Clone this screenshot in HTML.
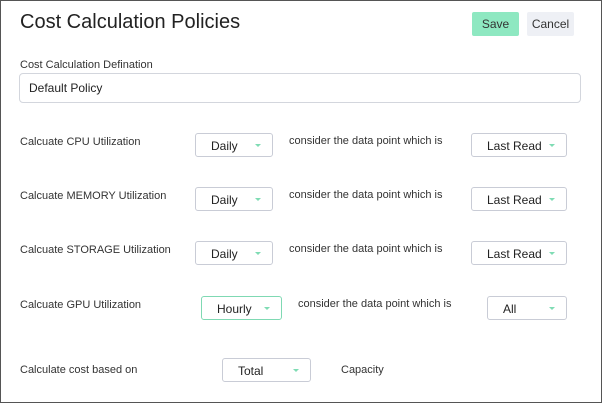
<html><head><style>
body{margin:0;width:602px;height:403px;overflow:hidden;background:#fff;font-family:"Liberation Sans",sans-serif;color:#333}
.f{position:absolute;left:0;top:0;width:600px;height:401px;border:1px solid #555}
.a{position:absolute;white-space:nowrap}
.t{font-size:11px;color:#333}
.dd{position:absolute;box-sizing:border-box;border:1px solid #c9ccd6;border-radius:3px;background:#fff;font-size:12px;color:#222}
.dd span{position:absolute;top:5px}
.dd i{position:absolute;right:11px;top:10px;width:0;height:0;border-left:3px solid transparent;border-right:3px solid transparent;border-top:3px solid #7fdcb4}
</style></head><body><div class="f"></div>
<div class="a" style="left:20px;top:11px;font-size:20px;color:#222">Cost Calculation Policies</div>
<div class="a" style="left:472px;top:12px;width:47px;height:24px;background:#8ee8c1;border-radius:2px;font-size:12px;text-align:center;line-height:24px">Save</div>
<div class="a" style="left:527px;top:12px;width:47px;height:24px;background:#eef0f5;border-radius:2px;font-size:12px;text-align:center;line-height:24px">Cancel</div>
<div class="a t" style="left:20px;top:59px">Cost Calculation Defination</div>
<div class="dd" style="left:19px;top:73px;width:562px;height:30px;border-radius:4px;border-color:#d3d6dd"><span style="left:9px;top:7px;font-size:12px">Default Policy</span></div>

<div class="a t" style="left:20px;top:136px">Calcuate CPU Utilization</div>
<div class="dd" style="left:195px;top:133px;width:78px;height:24px"><span style="left:15px">Daily</span><i></i></div>
<div class="a t" style="left:289px;top:135px">consider the data point which is</div>
<div class="dd" style="left:471px;top:133px;width:96px;height:24px"><span style="left:15px">Last Read</span><i></i></div>

<div class="a t" style="left:20px;top:190px">Calcuate MEMORY Utilization</div>
<div class="dd" style="left:195px;top:187px;width:78px;height:24px"><span style="left:15px">Daily</span><i></i></div>
<div class="a t" style="left:289px;top:189px">consider the data point which is</div>
<div class="dd" style="left:471px;top:187px;width:96px;height:24px"><span style="left:15px">Last Read</span><i></i></div>

<div class="a t" style="left:20px;top:244px">Calcuate STORAGE Utilization</div>
<div class="dd" style="left:195px;top:241px;width:78px;height:24px"><span style="left:15px">Daily</span><i></i></div>
<div class="a t" style="left:289px;top:243px">consider the data point which is</div>
<div class="dd" style="left:471px;top:241px;width:96px;height:24px"><span style="left:15px">Last Read</span><i></i></div>

<div class="a t" style="left:20px;top:299px">Calcuate GPU Utilization</div>
<div class="dd" style="left:201px;top:296px;width:81px;height:24px;border-color:#7fd9b3"><span style="left:15px">Hourly</span><i></i></div>
<div class="a t" style="left:298px;top:298px">consider the data point which is</div>
<div class="dd" style="left:487px;top:296px;width:80px;height:24px"><span style="left:15px">All</span><i></i></div>

<div class="a t" style="left:20px;top:364px">Calculate cost based on</div>
<div class="dd" style="left:222px;top:358px;width:89px;height:24px"><span style="left:15px">Total</span><i></i></div>
<div class="a t" style="left:341px;top:364px">Capacity</div>
</body></html>
